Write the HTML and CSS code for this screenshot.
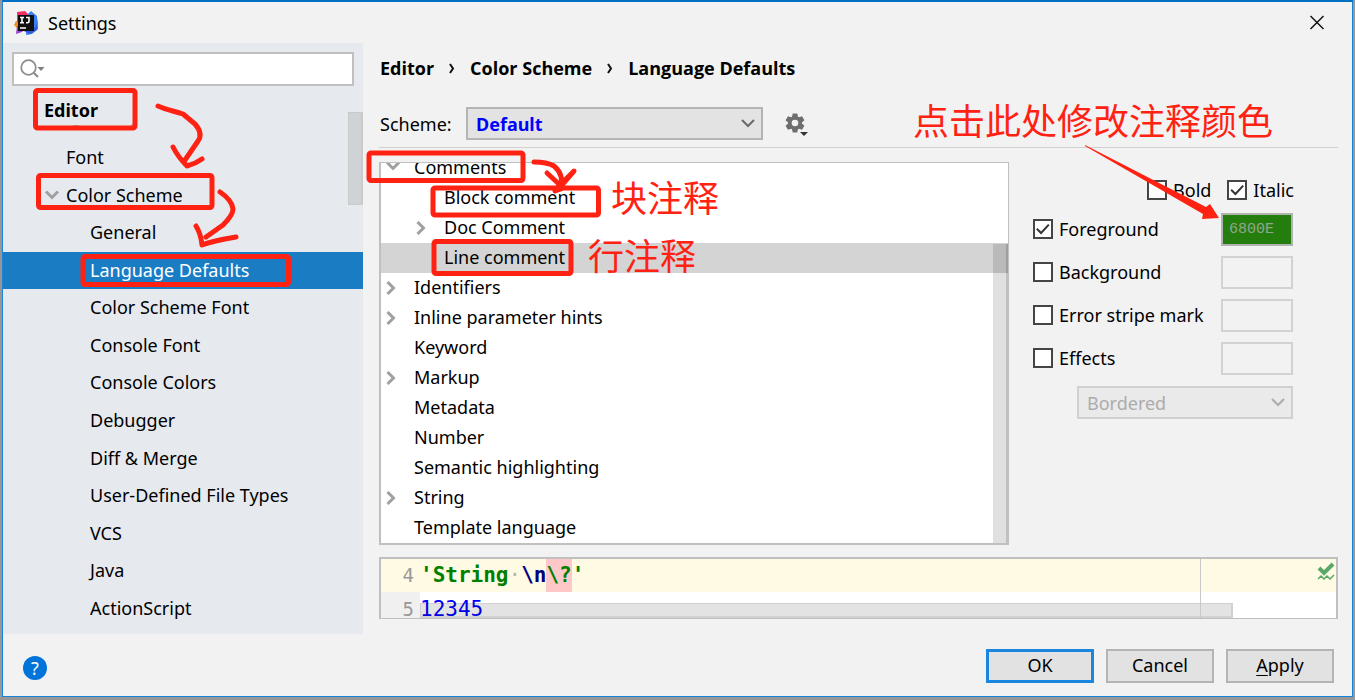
FILE: index.html
```html
<!DOCTYPE html>
<html lang="en">
<head>
<meta charset="utf-8">
<title>Settings</title>
<link rel="stylesheet" href="styles.css">
</head>
<body>
<div class="window">
  <header class="titlebar">
    <svg class="logo" width="24" height="24" viewBox="0 0 24 24" aria-hidden="true">
      <path fill="#fb2f68" d="M3 1 11 0l5 5-3 11-11-1 1-6z"/>
      <path fill="#f98a1e" d="M2 10 0 14l4 4 5-2z"/>
      <path fill="#3b7ff0" d="M13 4 17 0l6 5 1 13-6 5-6 1z"/>
      <path fill="#2c5be0" d="m24 8-1 11-7 4-6-3 12-4z"/>
      <path fill="#9b3fd6" d="M3 15 2 23l6-2 4-4z"/>
      <path fill="#111" d="M4 4h16v16H4z"/>
      <path fill="none" stroke="#fff" stroke-width="1.6" d="M6 6.500h4M8 6.500v5M6 11.800h4M12 6.500h3v3.800q0 1.500-1.500 1.500H12M6 17h6"/>
    </svg>
    <h1 class="title">Settings</h1>
    <button class="close" type="button" aria-label="Close">
      <svg width="14" height="15" viewBox="0 0 14 15"><path d="M.5 1l13 13M13.500 1l-13 13" fill="none" stroke="#111" stroke-width="1.500"/></svg>
    </button>
  </header>

  <div class="body">
    <aside class="sidebar">
      <div class="search">
        <svg width="26" height="20" viewBox="0 0 26 20" aria-hidden="true"><circle cx="8.500" cy="8.500" r="7.300" fill="none" stroke="#8c8c8c" stroke-width="1.700"/><path d="m13.500 13.500 4.500 4.500" stroke="#8c8c8c" stroke-width="2.200"/><path d="M17.500 8h7l-3.500 4z" fill="#7d7d7d"/></svg>
        <input type="text" aria-label="Search settings">
      </div>
      <div class="nav-head">Editor</div>
      <div class="nav-clip"><span>General</span></div>
      <ul class="nav">
        <li class="l1">Font</li>
        <li class="l1 open"><svg class="chev" width="14" height="10" viewBox="0 0 14 10"><path d="m1 1.500 6 6 6-6"/></svg>Color Scheme</li>
        <li>General</li>
        <li class="selected">Language Defaults</li>
        <li>Color Scheme Font</li>
        <li>Console Font</li>
        <li>Console Colors</li>
        <li>Debugger</li>
        <li>Diff &amp; Merge</li>
        <li>User-Defined File Types</li>
        <li>VCS</li>
        <li>Java</li>
        <li>ActionScript</li>
      </ul>
      <div class="nav-scroll"></div>
    </aside>

    <main class="main">
      <nav class="crumbs"><span>Editor</span><svg width="6" height="24" viewBox="0 0 6 24"><path d="m1 8 3 4.500L1 17"/></svg><span>Color Scheme</span><svg width="6" height="24" viewBox="0 0 6 24"><path d="m1 8 3 4.500L1 17"/></svg><span>Language Defaults</span></nav>
      <div class="scheme">
        <label for="scheme">Scheme:</label>
        <div class="combo">
          <select id="scheme"><option>Default</option></select>
          <svg width="14" height="9" viewBox="0 0 14 9"><path d="m1 1 6 6 6-6"/></svg>
        </div>
        <button class="gear" type="button" aria-label="Scheme actions">
          <svg width="26" height="24" viewBox="0 0 26 24"><g transform="translate(10 11)"><g fill="#6e6e6e"><circle r="7"/><path id="t" d="M-2.300-9.500h4.600l.8 4h-6.200z"/><use href="#t" transform="rotate(60)"/><use href="#t" transform="rotate(120)"/><use href="#t" transform="rotate(180)"/><use href="#t" transform="rotate(240)"/><use href="#t" transform="rotate(300)"/></g><circle r="3.300" fill="#f2f2f2"/></g><path d="M15 20h8l-4 4z" fill="#333"/></svg>
        </button>
      </div>
      <div class="content">
        <div class="tree">
          <ul>
            <li><svg class="chev" width="14" height="10" viewBox="0 0 14 10"><path d="m1 1.500 6 6 6-6"/></svg>Comments</li>
            <li class="child">Block comment</li>
            <li class="child"><svg class="chev" width="10" height="14" viewBox="0 0 10 14"><path d="m1.500 1 6 6-6 6"/></svg>Doc Comment</li>
            <li class="child current">Line comment</li>
            <li><svg class="chev" width="10" height="14" viewBox="0 0 10 14"><path d="m1.500 1 6 6-6 6"/></svg>Identifiers</li>
            <li><svg class="chev" width="10" height="14" viewBox="0 0 10 14"><path d="m1.500 1 6 6-6 6"/></svg>Inline parameter hints</li>
            <li>Keyword</li>
            <li><svg class="chev" width="10" height="14" viewBox="0 0 10 14"><path d="m1.500 1 6 6-6 6"/></svg>Markup</li>
            <li>Metadata</li>
            <li>Number</li>
            <li>Semantic highlighting</li>
            <li><svg class="chev" width="10" height="14" viewBox="0 0 10 14"><path d="m1.500 1 6 6-6 6"/></svg>String</li>
            <li>Template language</li>
          </ul>
          <div class="tree-scroll"></div>
        </div>
        <form class="attrs">
          <div class="style-row">
            <label><input type="checkbox">Bold</label>
            <label><input type="checkbox" checked>Italic</label>
          </div>
          <div class="attr"><label><input type="checkbox" checked>Foreground</label><input class="swatch green" type="text" value="6800E" aria-label="Foreground color"></div>
          <div class="attr"><label><input type="checkbox">Background</label><input class="swatch" type="text" disabled aria-label="Background color"></div>
          <div class="attr"><label><input type="checkbox">Error stripe mark</label><input class="swatch" type="text" disabled aria-label="Error stripe color"></div>
          <div class="attr"><label><input type="checkbox">Effects</label><input class="swatch" type="text" disabled aria-label="Effects color"></div>
          <div class="combo off">
            <select disabled aria-label="Effect type"><option>Bordered</option></select>
            <svg width="14" height="9" viewBox="0 0 14 9"><path d="m1 1 6 6 6-6"/></svg>
          </div>
        </form>
      </div>
      <div class="code">
        <div class="line active"><span class="num">4</span><code><b class="str">'String<span class="ws">·</span></b><b class="esc">\n</b><b class="str bad">\?</b><b class="str">'</b></code></div>
        <div class="line last"><span class="num">5</span><code class="digits">12345</code></div>
        <div class="code-scroll"></div>
        <div class="margin-line"></div>
        <svg class="ok-mark" width="18" height="18" viewBox="0 0 18 18"><path d="m2 6 5 5 9-9" fill="none" stroke="#59a869" stroke-width="4"/><path d="m1 17 3-3 3 3 3-3 3 3 4-4" fill="none" stroke="#59a869" stroke-width="1.500"/></svg>
      </div>
    </main>
  </div>

  <footer class="footer">
    <button class="help" type="button" aria-label="Help">?</button>
    <button class="btn primary" type="button">OK</button>
    <button class="btn" type="button">Cancel</button>
    <button class="btn" type="button"><u>A</u>pply</button>
  </footer>
</div>

<svg class="marks" width="640" height="300" viewBox="0 0 640 300" aria-hidden="true">
  <rect x="35.500" y="90.500" width="99.500" height="37.500" rx="2"/>
  <rect x="38.500" y="175.500" width="173.500" height="32" rx="2"/>
  <rect x="83" y="256.500" width="205.500" height="28" rx="2"/>
  <rect x="369" y="153" width="154" height="27.500" rx="2"/>
  <rect x="433" y="188" width="165.500" height="27" rx="2"/>
  <rect x="434" y="241.500" width="137" height="32" rx="2"/>
  <path d="M158 106c9 4 16 5 25 8l12 10c6 7 6 13 3 17l-13 19M173 147q5 10 14 19 8-2 15-7"/>
  <path d="M220 192q12 8 13 17 0 6-10 16l-17 12M196 226q5 8 6 19 10-4 34-8"/>
  <path d="M534 162q13 0 20 4 10 8 7 23l-6 2M547 173l14 13 13-15-19 19"/>
</svg>
<svg class="arrow" width="140" height="80" viewBox="0 0 140 80" aria-hidden="true"><path d="m2 1 121 62 4-3 9 14-17 1 1-5L2 2z"/></svg>
<div class="note block-note">块注释</div>
<div class="note line-note">行注释</div>
<div class="note color-note">点击此处修改注释颜色</div>
</body>
</html>
```
FILE: styles.css
```css
* { box-sizing: border-box; }
body {
  margin: 0;
  background: #979797;
  font: 18px/24px "Noto Sans", "Open Sans", sans-serif;
  color: #000;
}
button, input, select { font: inherit; color: inherit; margin: 0; }
ul { list-style: none; margin: 0; padding: 0; }

.window {
  display: flex;
  flex-direction: column;
  height: calc(100vh - 3px);
  margin: 0 2px;
  border: 1px solid #1883d7;
  border-top: 2px solid #006fc4;
  background: #f2f2f2;
}
.titlebar {
  display: flex;
  align-items: center;
  gap: 10px;
  height: 41px;
  padding: 0 28px 0 11px;
}
.title { flex: 1; margin: 0; font-size: 18px; font-weight: 400; }
.close, .gear { display: flex; padding: 0; border: 0; background: none; }

.body { display: flex; flex: 1; min-height: 0; }
.sidebar {
  position: relative;
  display: flex;
  flex-direction: column;
  width: 360px;
  padding: 9px 0 7px;
  background: #e6eaef;
}
.search {
  display: flex;
  align-items: center;
  height: 34px;
  margin: 0 9px;
  padding-left: 6px;
  border: 2px solid #c0c0c0;
  background: #fff;
}
.search input { flex: 1; min-width: 0; border: 0; outline: 0; background: none; }
.nav-head { padding: 12px 0 1px 41px; font-weight: 700; }
.nav-clip {
  height: 4px;
  margin-bottom: 12px;
  padding-left: 65px;
  overflow: hidden;
  color: #aaa;
}
.nav-clip span { display: block; margin-top: -4px; }
.nav {
  display: grid;
  grid-template-rows: repeat(13, 1fr);
  flex: 1;
}
.nav li { display: flex; align-items: center; padding: 0 0 1px 87px; }
.nav .l1 { padding-left: 63px; }
.nav .open { padding-left: 42px; gap: 7px; }
.nav .selected { background: #1a7dc4; color: #fff; }
.nav-scroll {
  position: absolute;
  top: 69px;
  right: 0;
  width: 15px;
  height: 93px;
  border: 1px solid #cacaca;
  border-right-width: 2px;
  background: #cfd3d6;
}
.chev { fill: none; stroke: #a0a0a0; stroke-width: 3; }

.main {
  display: flex;
  flex-direction: column;
  flex: 1;
  min-width: 0;
  padding: 13px 14px 15px 16px;
}
.crumbs { display: flex; gap: 15px; padding-left: 1px; font-weight: 700; font-family: "Open Sans", sans-serif; }
.crumbs svg { fill: none; stroke: #111; stroke-width: 2; }
.scheme {
  display: flex;
  align-items: center;
  padding: 27px 0 7px 1px;
  border-bottom: 1px solid #d0d0d0;
}
.scheme label { width: 86px; }
.combo { position: relative; width: 297px; height: 33px; }
.combo select {
  appearance: none;
  width: 100%;
  height: 100%;
  padding: 0 8px;
  border: 2px solid #b4b4b4;
  border-radius: 0;
  background: #e3e3e3;
  color: #00f;
  font-weight: 700;
}
.combo svg {
  position: absolute;
  top: 12px;
  right: 8px;
  fill: none;
  stroke: #6a6a6a;
  stroke-width: 2;
}
.gear { margin-left: 22px; }

.content { display: flex; flex: 1; min-height: 0; margin-top: 14px; }
.tree {
  position: relative;
  flex: 1;
  overflow: hidden;
  border: 1px solid #c0c0c0;
  border-width: 1px 1px 2px 2px;
  background: #fff;
}
.tree ul { margin-top: -10px; }
.tree li {
  position: relative;
  height: 30px;
  padding-left: 33px;
  line-height: 28px;
}
.tree .child { padding-left: 63px; }
.tree .current { background: #d4d4d4; }
.tree .chev { position: absolute; left: 5px; top: 8px; }
.tree .child .chev { left: 35px; }
.tree-scroll {
  position: absolute;
  top: 81px;
  right: 0;
  bottom: 0;
  width: 15px;
  border-right: 2px solid rgba(0, 0, 0, .14);
  background: rgba(0, 0, 0, .12);
}

.attrs {
  display: flex;
  flex-direction: column;
  gap: 10px;
  width: 329px;
  padding: 16px 44px 0 24px;
}
.style-row { display: flex; justify-content: flex-end; gap: 16px; padding-bottom: 1px; }
.attrs label { display: flex; align-items: center; gap: 6px; }
.attrs input[type="checkbox"] {
  appearance: none;
  display: grid;
  width: 20px;
  height: 20px;
  border: 2px solid #454545;
  background: #fff;
}
.attrs input[type="checkbox"]:checked::before {
  content: "";
  background: #333;
  clip-path: polygon(7% 53%, 15% 44%, 38% 66%, 82% 18%, 91% 26%, 38% 84%);
}
.attr { display: flex; justify-content: space-between; padding-right: 1px; }
.attr label { padding-bottom: 1px; }
.swatch {
  width: 72px;
  height: 33px;
  padding: 0 6px;
  border: 2px solid #d2d2d2;
  background: #f2f2f2;
}
.swatch.green {
  border-color: #b0b4b0;
  background: #237e0d;
  color: #93a68d;
  font: 15px "Liberation Mono", monospace;
}
.combo.off { align-self: flex-end; width: 216px; margin: 1px 1px 0 0; }
.combo.off select { border-color: #d0d0d0; background: #eaeaea; color: #acacac; font-weight: 400; opacity: 1; }
.combo.off svg { stroke: #acacac; }

.code {
  position: relative;
  height: 62px;
  margin-top: 12px;
  overflow: hidden;
  border: 2px solid #c0c0c0;
  border-bottom-width: 1px;
  background: #fff;
  font: 21px/33px "DejaVu Sans Mono", monospace;
}
.line { display: flex; height: 33px; background: #fff; }
.line.active, .line.active .num { background: #fffae3; }
.line.last { line-height: 34px; }
.num { width: 39px; padding-right: 6px; background: #f0f0f0; color: #999; font-size: 19px; text-align: right; }
.line code { font: inherit; }
.line b { display: inline-block; }
.str { color: #008000; }
.esc { color: #000080; }
.bad { background: #ffc8c8; }
.ws { color: #b8b8a8; font-weight: 400; }
.digits { color: #00f; }
.code-scroll {
  position: absolute;
  left: 39px;
  right: 103px;
  bottom: 0;
  height: 15px;
  border: 1px solid rgba(0, 0, 0, .08);
  border-right-width: 2px;
  border-bottom-width: 2px;
  background: rgba(0, 0, 0, .11);
}
.margin-line {
  position: absolute;
  top: 0;
  bottom: 0;
  right: 135px;
  width: 1px;
  background: #c8c8c8;
}
.ok-mark { position: absolute; top: 3px; right: 1px; }

.footer {
  display: flex;
  align-items: center;
  gap: 12px;
  height: 62px;
  padding: 2px 18px 0 20px;
}
.help {
  width: 24px;
  height: 24px;
  margin: 4px auto 0 0;
  padding: 0;
  border: 0;
  border-radius: 50%;
  background: #0074d9;
  color: #fff;
  line-height: 24px;
}
.btn {
  width: 108px;
  height: 34px;
  padding: 0 0 2px;
  border: 2px solid #b4b4b4;
  background: #e2e2e2;
}
.btn.primary { border: 3px solid #1a86dd; }
.btn u { text-underline-offset: 3px; }

.marks { position: absolute; left: 0; top: 0; pointer-events: none; fill: none; stroke: #ff2213; stroke-width: 5; stroke-linecap: round; stroke-linejoin: round; }
.arrow { position: absolute; top: 144px; right: 132px; pointer-events: none; fill: #ff2213; }
.note {
  position: absolute;
  color: #ff2213;
  font: 36px/44px "Noto Sans CJK SC", sans-serif;
  white-space: nowrap;
  pointer-events: none;
}
.block-note { left: 611px; top: 174px; }
.line-note { left: 588px; top: 232px; }
.color-note { right: 82px; top: 97px; }
```
